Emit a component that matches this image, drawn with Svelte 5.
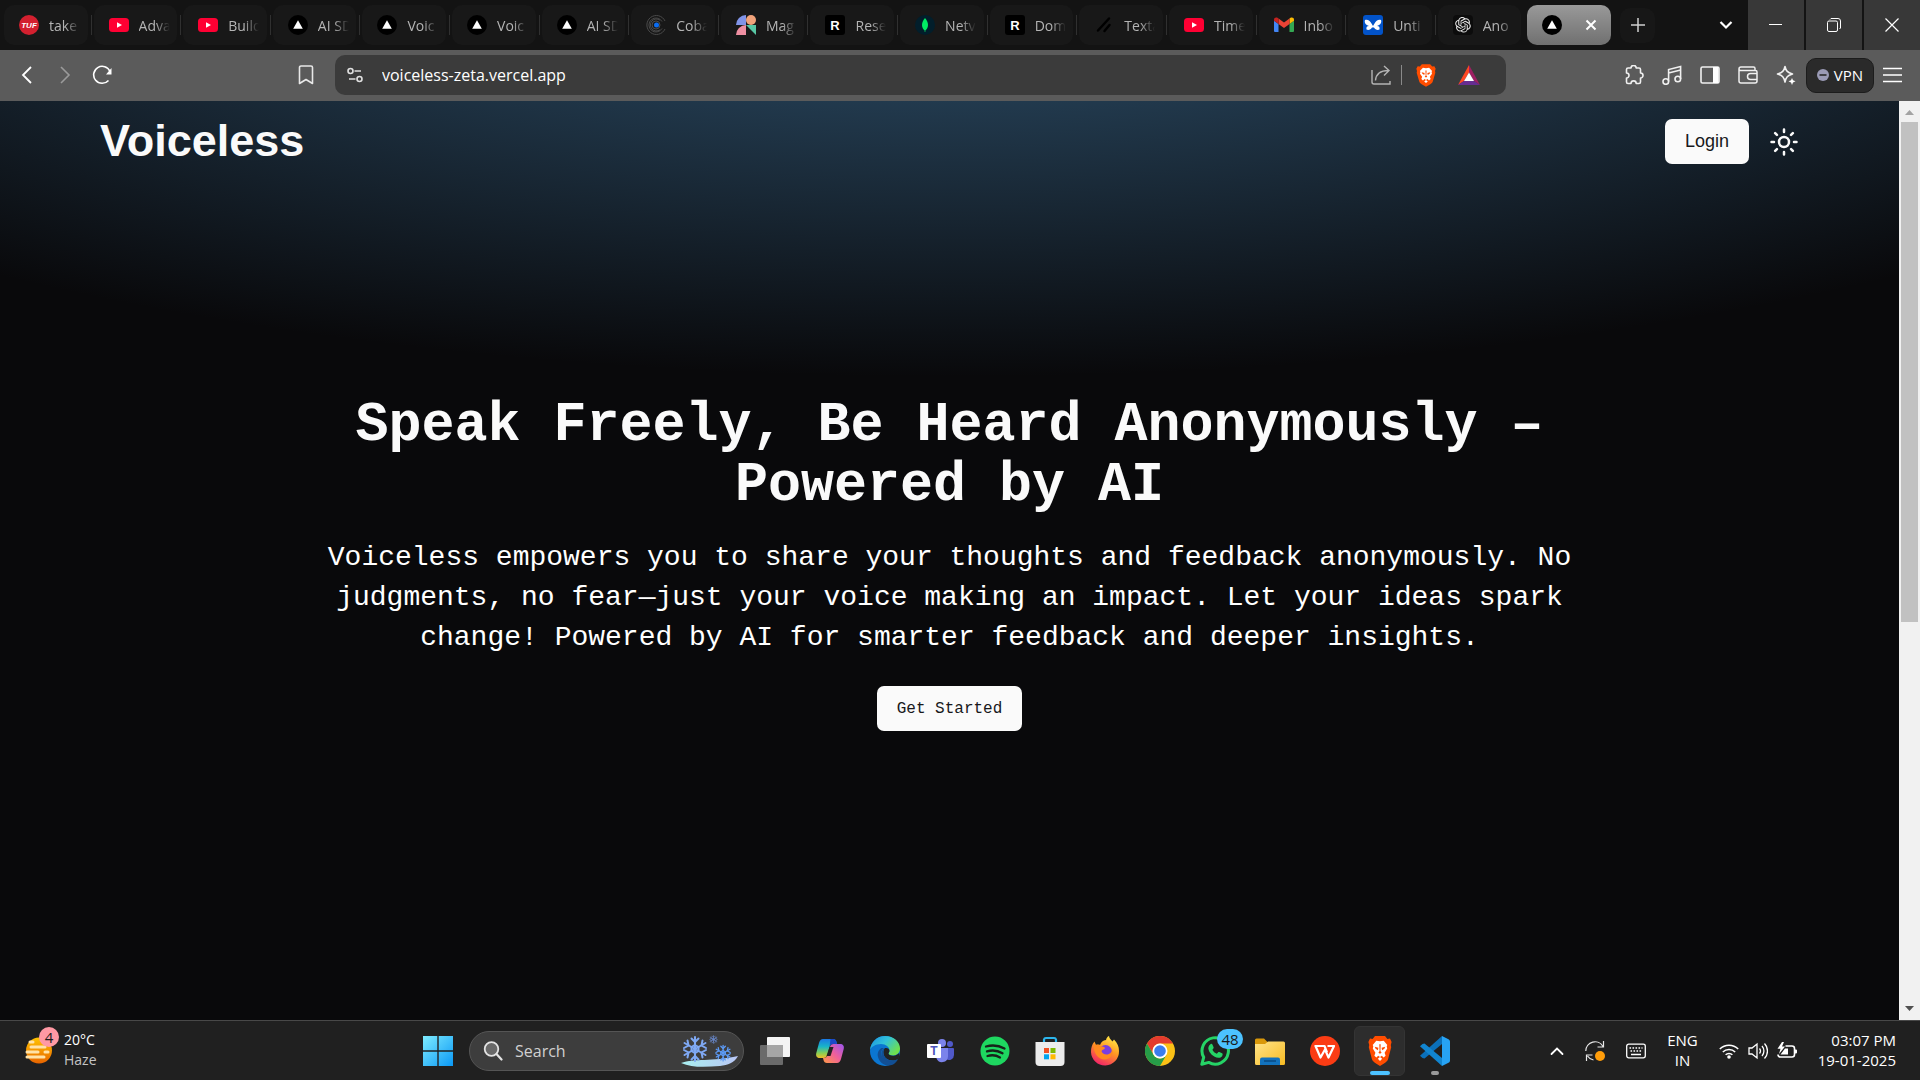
<script>
  const tabs = [
    { icon: 'tuf', title: 'take' },
    { icon: 'youtube', title: 'Adva' },
    { icon: 'youtube', title: 'Build' },
    { icon: 'vercel', title: 'AI SD' },
    { icon: 'vercel', title: 'Voic' },
    { icon: 'vercel', title: 'Voic' },
    { icon: 'vercel', title: 'AI SD' },
    { icon: 'cobalt', title: 'Coba' },
    { icon: 'magic', title: 'Mag' },
    { icon: 'resend', title: 'Rese' },
    { icon: 'mongo', title: 'Netv' },
    { icon: 'resend', title: 'Dom' },
    { icon: 'shadcn', title: 'Texta' },
    { icon: 'youtube', title: 'Time' },
    { icon: 'gmail', title: 'Inbo' },
    { icon: 'untitled', title: 'Unti' },
    { icon: 'openai', title: 'Ano' }
  ];

  const apps = [
    'Task view', 'Copilot', 'Edge', 'Teams', 'Spotify', 'Store', 'Firefox',
    'Chrome', 'WhatsApp', 'Explorer', 'WPS', 'Brave', 'VS Code'
  ];

  let url = $state('voiceless-zeta.vercel.app');
  let query = $state('');
</script>

{#snippet lion()}
  <path fill="#ff4d00" d="M7 0h10l2.400 2.600 2.600-.3 1.600 3.200-.8 2.700.4 2-3 10.300c-.5 1.700-1.500 2.500-3 3.500L12 27l-5.200-3c-1.500-1-2.500-1.800-3-3.500L.8 10.200l.4-2-.8-2.700L2 2.300l2.600.3z" />
  <path fill="#fff" d="M8.300 4.200 12 4.800l3.700-.6 3.600 3.900-.6 1.200.5 2-2.600 3.800 1 2.600-2 1.700-1.800-1.700-1.800 1.200 2.200 1.700L12 22.600 9.800 20.600l2.200-1.700-1.800-1.200-1.800 1.700-2-1.700 1-2.600-2.600-3.800.5-2-.6-1.200z" />
  <path fill="#ff4d00" d="m6.800 9.600 3.600 1-.5 2.200-2.300-1.400zM17.200 9.600l-3.600 1 .5 2.200 2.300-1.400zM11.300 7.500h1.400l-.3 6 1.200 1.500-1.600.9-1.600-.9 1.200-1.500z" />
{/snippet}

{#snippet favicon(name)}
  <svg class="favicon" viewBox="0 0 20 20" aria-hidden="true">
    {#if name === 'tuf'}
      <circle cx="10" cy="10" r="10" fill="#d3202f" />
      <text x="10" y="13" text-anchor="middle" font-size="8" font-weight="700" font-style="italic" fill="#fff">TUF</text>
    {:else if name === 'youtube'}
      <rect y="3" width="20" height="14" rx="3.500" fill="#ff0033" />
      <path d="m8 7.200 5 2.800-5 2.800z" fill="#fff" />
    {:else if name === 'vercel'}
      <circle cx="10" cy="10" r="10" fill="#000" />
      <path d="m10 5.200 4.800 8.600H5.200z" fill="#fff" />
    {:else if name === 'cobalt'}
      <g fill="none" stroke="#4a4a4a" stroke-width="1">
        <circle cx="10" cy="10" r="4" />
        <path d="M16 6.500a7 7 0 1 0 0 7M19 6a9.500 9.500 0 1 0 0 8M14 5.200a6 6 0 1 0 0 9.600" />
      </g>
      <circle cx="10.500" cy="10" r="2.500" fill="#0b6cf0" />
    {:else if name === 'magic'}
      <path d="M0 10A10 10 0 0 1 10 0v10z" fill="#8194e8" />
      <ellipse cx="15" cy="5" rx="5" ry="5" fill="#f0a27a" />
      <path d="M0 20a10 10 0 0 1 10-10v10z" fill="#ee8fa2" />
      <path d="M10 10h10v10z" fill="#58c7a5" />
      <path d="m10 10 4 2-4-2z" fill="#fff" />
    {:else if name === 'resend'}
      <rect width="20" height="20" rx="3" fill="#000" />
      <text x="10" y="15" text-anchor="middle" font-size="13" font-weight="700" fill="#fff">R</text>
    {:else if name === 'mongo'}
      <circle cx="10" cy="10" r="10" fill="#021e2b" />
      <path d="M10 3c2 2.400 3 4.400 3 7s-1.200 4.300-2.700 5.400V17h-.6v-1.600C8.200 14.300 7 12.600 7 10s1-4.600 3-7z" fill="#00ed64" />
    {:else if name === 'shadcn'}
      <path d="m4 15.500 11-12M10.500 16l5-6" stroke="#000" stroke-width="2.500" stroke-linecap="round" />
    {:else if name === 'gmail'}
      <path d="M1 17h3.500V9L0 5.700V16a1 1 0 0 0 1 1z" fill="#4285f4" />
      <path d="M15.500 17H19a1 1 0 0 0 1-1V5.700L15.500 9z" fill="#34a853" />
      <path d="M15.500 3.500V9L20 5.700V4.500C20 2.500 18 2 16.500 2.800z" fill="#fbbc04" />
      <path d="M4.500 9V3.500L10 7.600l5.500-4.100V9L10 13.100z" fill="#ea4335" />
      <path d="M0 4.500v1.200L4.500 9V3.500l-1-.7C2 2 0 2.500 0 4.500z" fill="#c5221f" />
    {:else if name === 'untitled'}
      <rect width="20" height="20" rx="3" fill="#0253c9" />
      <path d="M2 5c2-1 5 0 6.500 3.500L10 11l1.500-2.500C13 5 16 4 18 5c1 3-1 5-4 6 2 0 3 1 2.500 3.500-2 1-4.500 0-5.500-2h-2c-1 2-3.500 3-5.500 2C3 12 4 11 6 11 3 10 1 8 2 5z" fill="#fff" />
    {:else if name === 'openai'}
      <rect width="20" height="20" rx="4" fill="#0c0c0c" />
      <path transform="translate(2.200 2) scale(.65)" fill="#ececec" d="M22.2819 9.8211a5.9847 5.9847 0 0 0-.5157-4.9108 6.0462 6.0462 0 0 0-6.5098-2.9A6.0651 6.0651 0 0 0 4.9807 4.1818a5.9847 5.9847 0 0 0-3.9977 2.9 6.0462 6.0462 0 0 0 .7427 7.0966 5.98 5.98 0 0 0 .511 4.9107 6.051 6.051 0 0 0 6.5146 2.9001A5.9847 5.9847 0 0 0 13.2599 24a6.0557 6.0557 0 0 0 5.7718-4.2058 5.9894 5.9894 0 0 0 3.9977-2.9001 6.0557 6.0557 0 0 0-.7475-7.0729zm-9.022 12.6081a4.4755 4.4755 0 0 1-2.8764-1.0408l.1419-.0804 4.7783-2.7582a.7948.7948 0 0 0 .3927-.6813v-6.7369l2.02 1.1686a.071.071 0 0 1 .038.052v5.5826a4.504 4.504 0 0 1-4.4945 4.4944zm-9.6607-4.1254a4.4708 4.4708 0 0 1-.5346-3.0137l.142.0852 4.783 2.7582a.7712.7712 0 0 0 .7806 0l5.8428-3.3685v2.3324a.0804.0804 0 0 1-.0332.0615L9.74 19.9502a4.4992 4.4992 0 0 1-6.1408-1.6464zM2.3408 7.8956a4.485 4.485 0 0 1 2.3655-1.9728V11.6a.7664.7664 0 0 0 .3879.6765l5.8144 3.3543-2.0201 1.1685a.0757.0757 0 0 1-.071 0l-4.8303-2.7865A4.504 4.504 0 0 1 2.3408 7.872zm16.5963 3.8558L13.1038 8.364 15.1192 7.2a.0757.0757 0 0 1 .071 0l4.8303 2.7913a4.4944 4.4944 0 0 1-.6765 8.1042v-5.6772a.79.79 0 0 0-.407-.667zm2.0107-3.0231l-.142-.0852-4.7735-2.7818a.7759.7759 0 0 0-.7854 0L9.409 9.2297V6.8974a.0662.0662 0 0 1 .0284-.0615l4.8303-2.7866a4.4992 4.4992 0 0 1 6.6802 4.66zM8.3065 12.863l-2.02-1.1638a.0804.0804 0 0 1-.038-.0567V6.0742a4.4992 4.4992 0 0 1 7.3757-3.4537l-.142.0805L8.704 5.459a.7948.7948 0 0 0-.3927.6813zm1.0976-2.3654l2.602-1.4998 2.6069 1.4998v2.9994l-2.5974 1.4997-2.6067-1.4997Z" />
    {/if}
  </svg>
{/snippet}

{#snippet app(name)}
  <svg class="app-icon" viewBox="0 0 30 30" aria-hidden="true">
    {#if name === 'Task view'}
      <rect x="7" y="1" width="23" height="20" rx="1" fill="#f4f4f4" />
      <rect x="0" y="9" width="23" height="20" rx="1" fill="#6a6a6a" />
      <rect x="7" y="9" width="16" height="12" fill="#a5a5a5" />
    {:else if name === 'Copilot'}
      <path d="M8 3h10c2 0 3 1 3.500 3l.6 2H18c-2 0-3 1-3.500 3l-2.200 8c-.7 2-1.800 3-4 3H5c-3 0-4.500-2-3.700-5L4 7c.8-2.700 2-4 4-4z" fill="url(#cpA)" />
      <path d="M22 27H12c-2 0-3-1-3.500-3L8 22c3 0 4-1 4.700-3l2.300-8c.5-2 1.500-3 3.500-3H25c3 0 4.500 2 3.700 5L26 23c-.8 2.700-2 4-4 4z" fill="url(#cpB)" />
      <path d="M15.500 3H18c2 0 3 1 3.500 3l.6 2H18c-2 0-3 1-3.500 3z" fill="#1b48c8" />
      <path d="M14.500 11h4l-3 9h-4z" fill="#222" />
    {:else if name === 'Edge'}
      <circle cx="15" cy="15" r="15" fill="#0b76d1" />
      <path d="M0 14C1 6 7 0 15 0c9 0 15 6 15 12.500 0 4-3 7-7 7-3 0-4.500-1-4.500-2 0-.7 1-1.300 1-3C19.500 11 16 8 11 8 5.500 8 1 11 0 14z" fill="url(#edA)" />
      <path d="M11.500 12c-3 2-4.500 5-3.500 9 1.200 5 6 8.500 11 8.500 4 0 7-3 9-6-6 3-14 1.500-16.200-3.500-1.200-3-.8-6 2-8z" fill="#124f94" />
      <path d="M15 12c2.500-.5 4.500.8 4.500 2.800 0 1.500-1 2-1 2.700 0 1.200 2 2.300 5 2.200 2.300-.1 4.500-1.200 5.500-2.700 1 1.500.6 4-1 6-4 2.500-10 2-12.800-1.500C12.800 18.300 12.800 14 15 12z" fill="#222" />
      <path d="M15 12c-2.200 2-2.200 6.300.2 9.500 2.800 3.500 8.800 4 12.800 1.500-3 4-9 4-13 1.500-4.400-3-5-9.500-.5-12.500z" fill="#124f94" />
    {:else if name === 'Teams'}
      <circle cx="25" cy="8" r="3" fill="#5059c9" />
      <path d="M19 12h9a1 1 0 0 1 1 1v6a5 5 0 0 1-8 4z" fill="#5059c9" />
      <circle cx="17" cy="7" r="4" fill="#7b83eb" />
      <path d="M12 12h11v8.500a6 6 0 0 1-11.500 2z" fill="#7b83eb" />
      <rect x="2" y="8" width="14" height="14" rx="1" fill="#fff" />
      <text x="9" y="19" text-anchor="middle" font-size="12" font-weight="700" fill="#4b53bc">T</text>
    {:else if name === 'Spotify'}
      <circle cx="15" cy="15" r="14.500" fill="#1ed760" />
      <path d="M6 10.500c6-1.700 13-1 18.500 2M7 15.400c5-1.500 11-.8 15.500 1.800M7.500 20c4.500-1.300 9-.7 12.500 1.500" fill="none" stroke="#17231a" stroke-width="2.300" stroke-linecap="round" />
    {:else if name === 'Store'}
      <path d="M9 8V3.500A2 2 0 0 1 11 2h8a2 2 0 0 1 2 1.500V8" fill="none" stroke="#2cb5ec" stroke-width="2.200" />
      <path d="M.5 6h29v20a4 4 0 0 1-4 4h-21a4 4 0 0 1-4-4z" fill="#ececec" />
      <path d="M9 12h5v5H9z" fill="#f25022" /><path d="M15.500 12h5v5h-5z" fill="#7fba00" />
      <path d="M9 18.300h5v5H9z" fill="#00a4ef" /><path d="M15.500 18.300h5v5h-5z" fill="#ffb900" />
    {:else if name === 'Firefox'}
      <path d="M16 4c.5-2 1.500-3.500 3-4 .3 2.500 2 3.500 3.500 5.500L24 3.500c3.500 3.500 5 7 5 11.500a14 14 0 0 1-28 1c0-4 .8-7.500 3.500-10.500L6 9c1.500-.6 3-.6 4 0 1.200-3 3-4.500 6-5z" fill="url(#ffA)" />
      <circle cx="15.500" cy="15.500" r="6.500" fill="#7a3ee0" />
      <path d="M3.500 9c2.500-.5 5-.2 7 1.200 2 .2 4 .4 4.500 1.800-.5 1.500-2.500 1.500-3.500 3 .5 2 2.500 3.500 5 3.500 3.500 0 5.500-2.500 5.500-5.500 2 5-1.500 10.500-7.500 10.500C8 23.500 3.500 17 3.500 9z" fill="#ff8a1f" />
    {:else if name === 'Chrome'}
      <circle cx="15" cy="15" r="15" fill="#fbc116" />
      <path d="M2 7.500A15 15 0 0 1 28 7.500H15a7.500 7.500 0 0 0-6.500 11.200z" fill="#e33b2e" />
      <path d="M2 7.500a15 15 0 0 0 13 22.500l6.500-11.300a7.500 7.500 0 0 1-13 0z" fill="#269c48" />
      <circle cx="15" cy="15" r="7.500" fill="#fff" /><circle cx="15" cy="15" r="5.800" fill="#3b7ded" />
    {:else if name === 'WhatsApp'}
      <path d="M1.800 28.300 3.700 21.300A13.200 13.200 0 1 1 8.800 26.400z" fill="none" stroke="#25d366" stroke-width="3" stroke-linejoin="round" />
      <path d="M10.500 8.200c.7-.6 1.500-.4 1.900.3l1.200 2.700c.2.600 0 1-.4 1.500l-.8 1c.9 1.800 2.400 3.200 4.400 4.100l1.200-1.400c.4-.5.8-.6 1.400-.4l2.600 1.300c.6.300.7.7.6 1.400-.4 2.300-2.300 3.300-4.300 3.100-5-.8-9.200-4.600-10-9.400 0-1.600.9-3.200 2.200-4.200z" fill="#25d366" />
    {:else if name === 'Explorer'}
      <path d="M0 4a1.500 1.500 0 0 1 1.500-1.500H9l3.500 3.500V12H0z" fill="#d9980a" />
      <path d="M0 8h10l3-2.500h15.500A1.500 1.500 0 0 1 30 7v20.500A1.500 1.500 0 0 1 28.500 29h-27A1.500 1.500 0 0 1 0 27.500z" fill="url(#fxA)" />
      <path d="M5 29v-5.500A2 2 0 0 1 7 21.500h16a2 2 0 0 1 2 2V29z" fill="#1272bd" />
      <path d="M9 25h12" stroke="#084a83" stroke-width="1.500" />
    {:else if name === 'WPS'}
      <circle cx="15" cy="15" r="15" fill="#fb3c14" />
      <path d="M4.500 10h10l2.500 6.500M5.500 10l5 11.500 4.500-8 3.500 8L24 10h-6.500" fill="none" stroke="#fff" stroke-width="2.200" stroke-linejoin="round" />
    {:else if name === 'Brave'}
      <g transform="translate(3 0) scale(1 1.110)">{@render lion()}</g>
    {:else if name === 'VS Code'}
      <path d="M22 0v8L4.500 22.500 2.500 22 0 19.700z" fill="#0b70ba" />
      <path d="M0 10.200 2.500 8l2-.4L22 22v8z" fill="#1185d0" />
      <path d="m22 0 6.500 3.200A2.500 2.500 0 0 1 30 5.500v19a2.500 2.500 0 0 1-1.500 2.300L22 30z" fill="#27a3f4" />
    {/if}
  </svg>
{/snippet}

<svg class="defs" aria-hidden="true">
  <defs>
    <linearGradient id="cpA" x1="0" y1="0" x2="0" y2="1"><stop offset="0" stop-color="#1a78e5" /><stop offset=".4" stop-color="#18b5c8" /><stop offset=".75" stop-color="#8ccf52" /><stop offset="1" stop-color="#f2bd2b" /></linearGradient>
    <linearGradient id="cpB" x1="1" y1="0" x2="0" y2="1"><stop offset="0" stop-color="#9a55f0" /><stop offset=".5" stop-color="#f0609a" /><stop offset="1" stop-color="#ff9a45" /></linearGradient>
    <linearGradient id="edA" x1="0" y1="0" x2="1" y2=".6"><stop offset="0" stop-color="#1a8ee0" /><stop offset=".5" stop-color="#31c2da" /><stop offset="1" stop-color="#6fe04d" /></linearGradient>
    <linearGradient id="ffA" x1=".8" y1="0" x2=".3" y2="1"><stop offset="0" stop-color="#fff04a" /><stop offset=".45" stop-color="#ff9a22" /><stop offset="1" stop-color="#f2206a" /></linearGradient>
    <linearGradient id="fxA" x1="0" y1="0" x2="1" y2="1"><stop offset="0" stop-color="#ffe48a" /><stop offset="1" stop-color="#f7bb22" /></linearGradient>
    <linearGradient id="winA" x1="0" y1="0" x2="1" y2="1"><stop offset="0" stop-color="#7eecff" /><stop offset="1" stop-color="#0a98f5" /></linearGradient>
    <linearGradient id="sunA" x1="0" y1="0" x2="0" y2="1"><stop offset="0" stop-color="#ffc400" /><stop offset="1" stop-color="#e86400" /></linearGradient>
    <linearGradient id="iceA" x1="0" y1="0" x2="1" y2="0"><stop offset="0" stop-color="#a9f0f0" /><stop offset="1" stop-color="#b9c6f5" /></linearGradient>
  </defs>
</svg>

<div class="screen">
  <header class="tabbar">
    <div class="tabs">
      {#each tabs as tab}
        <button class="tab">
          {@render favicon(tab.icon)}
          <span class="tab-title">{tab.title}</span>
        </button>
      {/each}
      <div class="tab active">
        {@render favicon('vercel')}
        <button class="bare" aria-label="Close tab">
          <svg width="12" height="12" viewBox="0 0 12 12"><path d="m1.500 1.500 9 9m0-9-9 9" stroke="#fff" stroke-width="2" /></svg>
        </button>
      </div>
    </div>
    <button class="new-tab" aria-label="New tab">
      <svg width="14" height="14" viewBox="0 0 14 14"><path d="M7 0v14M0 7h14" stroke="#d0d0d0" stroke-width="1.500" /></svg>
    </button>
    <button class="tab-search" aria-label="Search tabs">
      <svg width="14" height="10" viewBox="0 0 14 10"><path d="m1.500 2 5.500 5.500L12.500 2" fill="none" stroke="#fff" stroke-width="2.200" /></svg>
    </button>
    <div class="window-controls">
      <button aria-label="Minimize"><svg width="14" height="14" viewBox="0 0 14 14"><path d="M0 6.500h13" stroke="#fff" /></svg></button>
      <button aria-label="Restore"><svg width="14" height="14" viewBox="0 0 14 14" fill="none" stroke="#fff"><rect x=".5" y="3" width="10" height="10.500" rx="1.500" /><path d="M3 1.500 4 .5h7a2.500 2.500 0 0 1 2.500 2.500v7l-1 1" /></svg></button>
      <button aria-label="Close"><svg width="14" height="14" viewBox="0 0 14 14"><path d="m.5.5 13 13m0-13-13 13" stroke="#fff" stroke-width="1.200" /></svg></button>
    </div>
  </header>

  <div class="toolbar">
    <div class="nav-buttons">
      <button class="bare" aria-label="Back"><svg width="20" height="20" viewBox="0 0 20 20"><path d="m13 2-8 8 8 8" fill="none" stroke="#fff" stroke-width="1.800" /></svg></button>
      <button class="bare" aria-label="Forward"><svg width="20" height="20" viewBox="0 0 20 20"><path d="m6 2 8 8-8 8" fill="none" stroke="#9b9b9b" stroke-width="1.600" /></svg></button>
      <button class="bare" aria-label="Reload"><svg width="20" height="20" viewBox="0 0 20 20"><path d="M16.500 15.500A8.500 8.500 0 1 1 18 6.500" fill="none" stroke="#fff" stroke-width="1.600" /><path d="M19.500 3v6.500H14z" fill="#fff" /></svg></button>
    </div>
    <button class="bare bookmark" aria-label="Bookmark"><svg width="16" height="20" viewBox="0 0 16 20"><path d="M1.500 2.500a1.500 1.500 0 0 1 1.500-1.500h10a1.500 1.500 0 0 1 1.500 1.500V18.500L8 14.500l-6.500 4z" fill="none" stroke="#e8e8e8" stroke-width="1.600" stroke-linejoin="round" /></svg></button>
    <div class="address">
      <button class="bare" aria-label="Site information"><svg width="16" height="16" viewBox="0 0 16 16" fill="none" stroke="#e0e0e0" stroke-width="1.600"><circle cx="3.500" cy="4" r="2.500" /><path d="M7.500 4H14M2 12h6.500" /><circle cx="12.500" cy="12" r="2.500" /></svg></button>
      <input class="url" type="text" aria-label="Address" bind:value={url} />
      <button class="bare" aria-label="Share"><svg width="20" height="20" viewBox="0 0 20 20" fill="none" stroke="#b4b4b4" stroke-width="1.400"><path d="M1 5v12a2 2 0 0 0 2 2h16v-3" /><path d="M4.500 15.500C5 9 9 5.500 17.500 5.500M13 1l5 4.500-5 5" /></svg></button>
      <span class="divider"></span>
      <button class="bare" aria-label="Brave Shields"><svg width="20" height="23" viewBox="0 0 24 27">{@render lion()}</svg></button>
      <button class="bare rewards" aria-label="Brave Rewards"><svg width="22" height="20" viewBox="0 0 22 20"><path d="M11 0 0 20l6-4 5-8.500z" fill="#ff4724" /><path d="m11 0 11 20-6-4-5-8.500z" fill="#9e1f63" /><path d="M0 20h22l-6-4H6z" fill="#662d91" /><path d="m11 7.500 5 8.500H6z" fill="#fff" /></svg></button>
    </div>
    <div class="tools">
      <button class="bare" aria-label="Extensions"><svg width="20" height="20" viewBox="0 0 20 20"><path d="M4 3h3a2.600 2.600 0 0 1 5.200 0H15a1.500 1.500 0 0 1 1.500 1.500V8a2.500 2.500 0 0 1 0 5v4a1.500 1.500 0 0 1-1.500 1.500h-2.800a2.600 2.600 0 0 0-5.200 0H4A1.500 1.500 0 0 1 2.500 17v-4a2.500 2.500 0 0 0 0-5V4.500A1.500 1.500 0 0 1 4 3z" fill="none" stroke="#f0f0f0" stroke-width="1.600" stroke-linejoin="round" /></svg></button>
      <button class="bare" aria-label="Playlist"><svg width="20" height="20" viewBox="0 0 20 20" fill="none" stroke="#f0f0f0" stroke-width="1.600"><circle cx="3.800" cy="16.500" r="2.800" /><circle cx="15.800" cy="14" r="2.800" /><path d="M6.600 16.500V4.500l12-3V14M6.600 8l12-3" /></svg></button>
      <button class="bare" aria-label="Sidebar"><svg width="20" height="20" viewBox="0 0 20 20"><rect x="1" y="2" width="18" height="16" rx="1.500" fill="none" stroke="#f0f0f0" stroke-width="1.600" /><path d="M13 2h5.500v16H13z" fill="#fff" /></svg></button>
      <button class="bare" aria-label="Wallet"><svg width="20" height="20" viewBox="0 0 20 20" fill="none" stroke="#f0f0f0" stroke-width="1.500"><path d="M1 4v12a2 2 0 0 0 2 2h14a2 2 0 0 0 2-2V7a1.500 1.500 0 0 0-1.500-1.500H2.500A1.500 1.500 0 0 1 1 4a2 2 0 0 1 2-2h12.500a1.500 1.500 0 0 1 1.500 1.500v2" /><path d="M19 8.500h-6.500a3 3 0 0 0 0 6H19" /></svg></button>
      <button class="bare" aria-label="Leo AI"><svg width="20" height="20" viewBox="0 0 20 20"><path d="M9 1.500c1 4.500 2.500 6 7.500 7.500-5 1.500-6.500 3-7.500 8-1-5-2.500-6.500-7.500-8 5-1.500 6.500-3 7.500-7.500z" fill="none" stroke="#f0f0f0" stroke-width="1.600" stroke-linejoin="round" /><path d="m16 13 1 2.200 2.500 1.100-2.500 1.200-1 2.500-1-2.500-2.500-1.200 2.500-1.100z" fill="#fff" /></svg></button>
      <button class="vpn"><svg width="12" height="12" viewBox="0 0 12 12" aria-hidden="true"><circle cx="6" cy="6" r="6" fill="#9a9ab5" /><path d="M2.500 6h7" stroke="#2a2a2a" stroke-width="1.600" /></svg>VPN</button>
      <button class="bare menu" aria-label="Menu"><svg width="20" height="16" viewBox="0 0 20 16"><path d="M0 1.500h19M0 8h19M0 14.500h19" stroke="#fff" stroke-width="1.500" /></svg></button>
    </div>
  </div>

  <div class="viewport">
    <main class="page">
      <nav class="site-nav">
        <a class="brand" href="/">Voiceless</a>
        <div class="site-actions">
          <button class="primary login">Login</button>
          <button class="bare" aria-label="Toggle theme">
            <svg width="30" height="30" viewBox="0 0 24 24" fill="none" stroke="#fafafa" stroke-width="2" stroke-linecap="round"><circle cx="12" cy="12" r="4" /><path d="M12 2v2M12 20v2M4.930 4.930l1.410 1.410M17.660 17.660l1.410 1.410M2 12h2M20 12h2M6.340 17.660l-1.410 1.410M19.070 4.930l-1.410 1.410" /></svg>
          </button>
        </div>
      </nav>
      <section class="hero">
        <h1>Speak Freely, Be Heard Anonymously – Powered by AI</h1>
        <p>Voiceless empowers you to share your thoughts and feedback anonymously. No judgments, no fear—just your voice making an impact. Let your ideas spark change! Powered by AI for smarter feedback and deeper insights.</p>
        <button class="primary start">Get Started</button>
      </section>
    </main>
    <div class="scrollbar" aria-hidden="true">
      <svg width="9" height="5" viewBox="0 0 9 5"><path d="m0 5 4.500-5L9 5z" fill="#a3a3a3" /></svg>
      <div class="track"><div class="thumb"></div></div>
      <svg width="9" height="5" viewBox="0 0 9 5"><path d="m0 0 4.500 5L9 0z" fill="#505050" /></svg>
    </div>
  </div>

  <footer class="taskbar">
    <div class="task-left">
      <button class="weather">
        <span class="weather-icon">
          <svg width="30" height="27" viewBox="0 0 30 27" aria-hidden="true"><circle cx="15" cy="13.500" r="13" fill="url(#sunA)" /><g stroke="#ffe2a8" stroke-width="3" stroke-linecap="round"><path d="M6 5h3M7 10h14M3 15h11M21 15h3M3 20h17" /></g></svg>
          <span class="badge alert">4</span>
        </span>
        <span class="weather-text"><span>20°C</span><span class="muted">Haze</span></span>
      </button>
    </div>
    <div class="task-center">
      <button class="cell" aria-label="Start"><svg class="app-icon" viewBox="0 0 30 30"><path d="M0 0h14.300v14.300H0zM15.700 0H30v14.300H15.700zM0 15.700h14.300V30H0zM15.700 15.700H30V30H15.700z" fill="url(#winA)" /></svg></button>
      <label class="search">
        <svg width="20" height="20" viewBox="0 0 20 20" aria-hidden="true"><circle cx="8.500" cy="8" r="6.800" fill="#696969" stroke="#e4e4e4" stroke-width="1.800" /><path d="m13.500 13 5 5.500" stroke="#e4e4e4" stroke-width="2.200" stroke-linecap="round" /></svg>
        <input type="text" placeholder="Search" aria-label="Search" bind:value={query} />
        <svg width="57" height="32" viewBox="0 0 57 32" aria-hidden="true">
          <path d="M0 28C14 23 30 27 57 21c-4 7-10 9-18 10-14 1-28 2-39-3z" fill="url(#iceA)" />
          <g fill="none" stroke="#7fa9f4" stroke-width="2" stroke-linecap="round">
            <g id="flake"><path d="M14 2v24M3.500 8l21 12M3.500 20l21-12" /><path d="m10.500 3.500 3.500 3.500 3.500-3.500M10.500 24.500 14 21l3.500 3.500M3 13l4.500-2.500L6.500 5.500M25 15l-4.500 2.500 1 5M3 15l4.500 2.500-1 5M25 13l-4.500-2.500 1-5M14 10l3.500 2v4L14 18l-3.500-2v-4z" /></g>
            <use href="#flake" transform="translate(33 9) scale(.65)" stroke="#5c9af5" />
            <use href="#flake" transform="translate(28 0) scale(.32)" stroke="#6c8fd8" />
          </g>
        </svg>
      </label>
      {#each apps as name}
        <button class="cell" class:current={name === 'Brave'} class:running={name === 'VS Code'} aria-label={name}>
          {@render app(name)}
          {#if name === 'WhatsApp'}<span class="badge count">48</span>{/if}
        </button>
      {/each}
    </div>
    <div class="task-right">
      <button class="bare" aria-label="Hidden icons"><svg width="14" height="10" viewBox="0 0 14 10"><path d="m1.500 8 5.500-5.500L12.500 8" fill="none" stroke="#fff" stroke-width="1.800" stroke-linecap="round" /></svg></button>
      <button class="bare" aria-label="Updates"><svg width="20" height="20" viewBox="0 0 20 20" fill="none" stroke="#e8e8e8" stroke-width="1.200"><path d="M.8 10A9.200 9.200 0 0 1 18 5.500M18.500 0v6h-6M1.500 20v-6h6M2.500 15a9 9 0 0 0 6 4" /><circle cx="15" cy="15" r="5" fill="#ff9d0a" stroke="none" /></svg></button>
      <button class="bare" aria-label="Touch keyboard"><svg width="20" height="16" viewBox="0 0 20 16"><rect x=".7" y="1.200" width="18.600" height="13.600" rx="2" fill="none" stroke="#fff" stroke-width="1.300" /><path d="M3.500 5h13M4.500 8h11" stroke="#fff" stroke-width="1.600" stroke-dasharray="1.600 1.400" /><path d="M5 11.500h10" stroke="#fff" stroke-width="1.500" /></svg></button>
      <button class="lang"><span>ENG</span><span>IN</span></button>
      <button class="status" aria-label="Network, volume, battery">
        <svg width="20" height="16" viewBox="0 0 20 16" fill="none" stroke="#fff" stroke-width="1.500"><path d="M.8 6a13 13 0 0 1 18.400 0M3.800 9a8.800 8.800 0 0 1 12.400 0M6.600 11.800a4.800 4.800 0 0 1 6.800 0" /><circle cx="10" cy="14" r="1.800" fill="#fff" stroke="none" /></svg>
        <svg width="20" height="18" viewBox="0 0 20 18" fill="none" stroke="#fff" stroke-width="1.300"><path d="M1 6v6h3l5 4V2L4 6zM11.500 6.500a4 4 0 0 1 0 5M14 4a7.500 7.500 0 0 1 0 10M16.500 1.500a11 11 0 0 1 0 15" /></svg>
        <svg width="20" height="18" viewBox="0 0 20 18"><path d="M8.500 4H15a2.500 2.500 0 0 1 2.500 2.500v6A2.500 2.500 0 0 1 15 15H3.500A2.500 2.500 0 0 1 1 12.500" fill="none" stroke="#fff" stroke-width="1.600" /><path d="M18 7.500h1a1 1 0 0 1 1 1v2a1 1 0 0 1-1 1h-1zM3.500 12.500 8 6.500h3v6zM5 0 .5 6.800h3L2 12l6-7.500H5L7 0z" fill="#fff" /></svg>
      </button>
      <button class="clock"><span>03:07 PM</span><span>19-01-2025</span></button>
    </div>
  </footer>
</div>

<style>
  :global(body) { margin: 0; background: #09090b; }
  .screen {
    display: flex;
    flex-direction: column;
    min-height: 100vh;
    font-family: "Open Sans", "Noto Sans", sans-serif;
    font-size: 15px;
    color: #fff;
  }
  .screen *, .screen { box-sizing: border-box; }
  .defs { position: absolute; width: 0; height: 0; }
  svg { display: block; flex: none; }
  svg text { font-family: "Liberation Sans", Arial, sans-serif; }
  button, input { font: inherit; color: inherit; border: 0; background: none; padding: 0; margin: 0; }
  button { cursor: pointer; display: flex; align-items: center; justify-content: center; }
  input { outline: none; min-width: 0; }
  .bare { flex: none; }

  .tabbar { display: flex; align-items: center; height: 50px; padding-left: 4px; background: #131313; }
  .tabs { display: flex; flex: 1; gap: 6px; min-width: 0; }
  .tab {
    position: relative;
    display: flex;
    flex: 1 1 0;
    align-items: center;
    justify-content: flex-start;
    gap: 10px;
    min-width: 0;
    height: 40px;
    padding: 0 0 0 15px;
    border-radius: 10px;
    background: #181818;
    color: #b4b4b4;
    font-size: 14px;
  }
  .tab:not(.active):not(:nth-last-child(2))::after {
    content: '';
    position: absolute;
    right: -4px;
    width: 1px;
    height: 20px;
    background: #303030;
  }
  .tab.active { gap: 23px; background: linear-gradient(#999, #707070); }
  .favicon { width: 20px; height: 20px; }
  .tab-title {
    flex: 1;
    min-width: 0;
    overflow: hidden;
    text-align: left;
    white-space: nowrap;
    mask-image: linear-gradient(to right, #000 16px, transparent 31px);
  }
  .new-tab { width: 35px; height: 35px; margin-left: 9px; border-radius: 10px; background: #171717; }
  .tab-search { width: 44px; height: 40px; margin-left: 49px; }
  .window-controls { display: flex; align-self: stretch; gap: 2px; }
  .window-controls button { width: 56px; background: #383838; }

  .toolbar { display: flex; align-items: center; height: 51px; padding-bottom: 1px; background: #5b5b5b; }
  .nav-buttons { display: flex; gap: 17px; padding-left: 18px; }
  .bookmark { margin: 0 21px 0 186px; }
  .address {
    display: flex;
    flex: 1;
    align-items: center;
    height: 40px;
    padding: 0 26px 0 12px;
    border-radius: 10px;
    background: #3b3b3b;
    min-width: 0;
  }
  .url { flex: 1; margin-left: 19px; font-size: 16px; }
  .divider { width: 1px; height: 20px; margin: 0 14px 0 10px; background: #8a8a8a; }
  .rewards { margin-left: 22px; }
  .tools { display: flex; align-items: center; gap: 18px; margin: 0 17px 0 118px; }
  .vpn {
    gap: 5px;
    width: 68px;
    height: 35px;
    margin: 0 -9px 0 -8px;
    border: 1px solid #1c1c1c;
    border-radius: 10px;
    background: #2a2a2a;
    font-size: 15px;
  }

  .viewport { display: flex; flex: 1; }
  .page {
    flex: 1;
    min-width: 0;
    background: radial-gradient(ellipse 80% 50% at 50% -20%, rgb(50, 90, 122), rgba(50, 90, 122, 0)) #09090b;
    color: #fafafa;
  }
  .site-nav { display: flex; align-items: center; justify-content: space-between; height: 81px; padding: 0 100px; }
  .brand { padding-bottom: 2px; color: inherit; text-decoration: none; font: 700 45px/45px "Liberation Sans", Arial, sans-serif; }
  .site-actions { display: flex; align-items: center; gap: 20px; }
  .primary { height: 45px; padding: 0 20px; border-radius: 7px; background: #fafafa; color: #18181b; }
  .login { font: 18px "Liberation Sans", Arial, sans-serif; }
  .hero {
    display: flex;
    flex-direction: column;
    align-items: center;
    max-width: 1280px;
    margin: 0 auto;
    padding-top: 214px;
    font-family: "Liberation Mono", Consolas, monospace;
    text-align: center;
  }
  h1 { margin: 0; font-size: 55px; line-height: 60px; font-weight: 700; }
  p { margin: 22px 0 28px; font-size: 28px; line-height: 40px; color: #fff; }
  .start { font-size: 16px; }

  .scrollbar { display: flex; flex-direction: column; align-items: center; width: 21px; padding: 9px 0; background: #f1f1f1; }
  .track { flex: 1; align-self: stretch; padding: 7px 2px; }
  .thumb { height: 57%; background: #c1c1c1; }

  .taskbar { display: flex; height: 60px; border-top: 1px solid #484848; background: #202020; }
  .taskbar span { line-height: 20px; }
  .task-left { flex: 1 1 0; display: flex; padding-left: 24px; }
  .weather { gap: 10px; }
  .weather-icon { position: relative; }
  .weather-text { display: flex; flex-direction: column; align-items: flex-start; padding-bottom: 2px; font-size: 14px; }
  .muted { color: #c4c4c4; }
  .badge { position: absolute; border-radius: 10px; font-size: 15px; color: #1a1a1a; text-align: center; height: 20px; }
  .alert { width: 20px; top: -10px; left: 15px; background: #ff99a4; }
  .count { width: 26px; top: 3px; right: -1px; background: #4cc2ff; }
  .task-center { display: flex; align-items: center; }
  .cell { position: relative; width: 55px; height: 50px; }
  .app-icon { width: 30px; height: 30px; }
  .current .app-icon, .running .app-icon { position: relative; }
  .current::before { content: ''; position: absolute; inset: 0 2px; border: 1px solid #343434; border-radius: 6px; background: #2d2d2d; }
  .current::after, .running::after {
    content: '';
    position: absolute;
    bottom: 1px;
    width: 20px;
    height: 4px;
    border-radius: 2px;
    background: #4cc2ff;
  }
  .running::after { width: 8px; background: #9a9a9a; }
  .search {
    display: flex;
    align-items: center;
    width: 275px;
    height: 40px;
    margin: 0 3px 0 4px;
    padding: 0 5px 0 13px;
    border: 1px solid #555;
    border-radius: 20px;
    background: #3d3d3d;
  }
  .search input { flex: 1; margin-left: 12px; font-size: 16px; }
  .search input::placeholder { color: #d0d0d0; opacity: 1; }
  .task-right { flex: 1 1 72px; display: flex; align-items: center; justify-content: flex-end; gap: 21px; padding-right: 24px; }
  .lang, .clock { flex-direction: column; padding-bottom: 2px; font-size: 15px; }
  .clock { align-items: flex-end; }
  .status { gap: 9px; }
</style>
